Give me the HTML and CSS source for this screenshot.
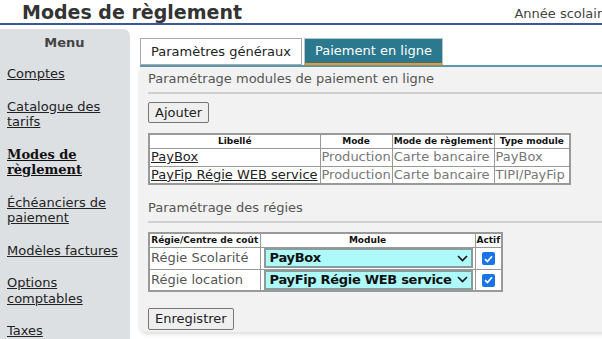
FILE: index.html
```html
<!DOCTYPE html>
<html lang="fr">
<head>
<meta charset="utf-8">
<title>Modes de règlement</title>
<link rel="stylesheet" href="styles.css">
</head>
<body>
<header class="top">
  <h1 class="title">Modes de règlement</h1>
  <span class="year">Année scolaire 2023-2024</span>
</header>
<div class="layout">
  <nav class="side">
    <div class="menu-title">Menu</div>
    <a class="nav-link" href="#">Comptes</a>
    <a class="nav-link" href="#">Catalogue des tarifs</a>
    <a class="nav-link current" href="#">Modes de règlement</a>
    <a class="nav-link" href="#">Échéanciers de paiement</a>
    <a class="nav-link" href="#">Modèles factures</a>
    <a class="nav-link" href="#">Options comptables</a>
    <a class="nav-link" href="#">Taxes</a>
  </nav>
  <main class="main">
    <div class="tabs">
      <span class="tab">Paramètres généraux</span>
      <span class="tab active">Paiement en ligne</span>
    </div>
    <section class="panel">
      <h2 class="sec">Paramétrage modules de paiement en ligne</h2>
      <div class="rule"></div>
      <button class="btn" type="button">Ajouter</button>
      <table class="grid modules">
        <thead>
          <tr><th class="c-lib">Libellé</th><th class="c-mode">Mode</th><th class="c-reg">Mode de règlement</th><th class="c-type">Type module</th></tr>
        </thead>
        <tbody>
          <tr><td><a href="#">PayBox</a></td><td class="muted">Production</td><td class="muted">Carte bancaire</td><td class="muted">PayBox</td></tr>
          <tr><td><a href="#">PayFip Régie WEB service</a></td><td class="muted">Production</td><td class="muted">Carte bancaire</td><td class="muted">TIPI/PayFip</td></tr>
        </tbody>
      </table>
      <h2 class="sec sec2">Paramétrage des régies</h2>
      <div class="rule"></div>
      <table class="grid regies">
        <thead>
          <tr><th class="r-name">Régie/Centre de coût</th><th class="r-mod">Module</th><th class="r-act">Actif</th></tr>
        </thead>
        <tbody>
          <tr>
            <td class="muted">Régie Scolarité</td>
            <td><span class="sel"><span class="sel-text">PayBox</span><svg class="chev" width="11" height="7" viewBox="0 0 11 7"><path d="M1 1l4.5 4.5L10 1" fill="none" stroke="#111" stroke-width="1.6"/></svg></span></td>
            <td class="center"><span class="chk"><svg width="9" height="8" viewBox="0 0 9 8"><path d="M1 4.2l2.4 2.3L8 1.3" fill="none" stroke="#fff" stroke-width="1.7"/></svg></span></td>
          </tr>
          <tr>
            <td class="muted">Régie location</td>
            <td><span class="sel"><span class="sel-text">PayFip Régie WEB service</span><svg class="chev" width="11" height="7" viewBox="0 0 11 7"><path d="M1 1l4.5 4.5L10 1" fill="none" stroke="#111" stroke-width="1.6"/></svg></span></td>
            <td class="center"><span class="chk"><svg width="9" height="8" viewBox="0 0 9 8"><path d="M1 4.2l2.4 2.3L8 1.3" fill="none" stroke="#fff" stroke-width="1.7"/></svg></span></td>
          </tr>
        </tbody>
      </table>
      <button class="btn save" type="button">Enregistrer</button>
    </section>
  </main>
</div>
</body>
</html>
```

FILE: styles.css
```css
* { box-sizing: border-box; }
html, body { margin: 0; padding: 0; }
body {
  font-family: "DejaVu Sans", Verdana, sans-serif;
  font-size: 13px;
  color: #333;
  background: #fff;
  width: 602px;
  height: 339px;
  overflow: hidden;
}
.top {
  display: flex;
  align-items: flex-end;
  justify-content: space-between;
  height: 25px;
  border-bottom: 2px solid #3b5a92;
  padding-left: 22px;
  white-space: nowrap;
  overflow: hidden;
}
.title {
  margin: 0;
  font-size: 19px;
  font-weight: bold;
  color: #333;
  line-height: 22px;
}
.year {
  font-size: 13px;
  color: #444;
  line-height: 16px;
  margin-right: -83px;
  padding-bottom: 1px;
}
.layout {
  display: flex;
  gap: 10px;
  padding-top: 4px;
}
.side {
  width: 130px;
  flex: none;
  height: 320px;
  background: #dde0e3;
  border-top-right-radius: 7px;
  padding: 6px 8px 0 7px;
  display: flex;
  flex-direction: column;
  align-items: flex-start;
  gap: 17px;
}
.menu-title {
  align-self: stretch;
  text-align: center;
  font-weight: bold;
  color: #444;
  line-height: 16px;
  margin-bottom: -2px;
}
.nav-link {
  color: #222;
  text-decoration: underline;
  line-height: 15.5px;
}
.nav-link.current {
  font-family: "DejaVu Serif", serif;
  font-weight: bold;
  color: #111;
}
.main {
  flex: 1;
  min-width: 0;
  padding-top: 9px;
}
.tabs {
  display: flex;
  gap: 2px;
  height: 29px;
  border-bottom: 2px solid #5d9aab;
  align-items: flex-start;
}
.tab {
  height: 27px;
  padding: 0 10px;
  line-height: 25px;
  border: 1px solid #aaa;
  background: #fff;
  color: #222;
  white-space: nowrap;
}
.tab.active {
  background: #2b798e;
  border-color: #b8c5c9;
  color: #fff;
  border-bottom: 2px solid #f7931e;
  line-height: 24px;
}
.panel {
  background: #f2f2f2;
  height: 265px;
  margin-right: -10px;
  padding: 4px 8px 0 8px;
  border-bottom-left-radius: 7px;
  box-shadow: 0 2px 4px rgba(0,0,0,0.15);
}
.sec {
  margin: 0;
  font-size: 13px;
  font-weight: normal;
  color: #555;
  line-height: 16px;
}
.sec2 { margin-top: 15px; }
.rule {
  height: 2px;
  background: #cfcfcf;
  margin: 5px 0 8px;
}
.btn {
  display: block;
  font-family: "DejaVu Sans", Verdana, sans-serif;
  font-size: 13px;
  color: #222;
  background: #efefef;
  border: 1px solid #767676;
  border-radius: 2px;
  padding: 0 6px;
  height: 21px;
  line-height: 18px;
}
.save { margin-top: 16px; height: 22px; }
.grid {
  border-collapse: collapse;
  background: #fff;
  border: 2px solid #999;
}
.grid th, .grid td {
  border: 1px solid #999;
  padding: 0 1px;
  white-space: nowrap;
}
.grid th {
  font-size: 9px;
  font-weight: bold;
  color: #111;
  line-height: 12px;
  height: 14px;
}
.grid td {
  line-height: 16px;
  height: 18px;
}
.grid a { color: #222; text-decoration: underline; }
.muted { color: #777; }
.modules { margin-top: 10px; }
.modules .c-lib { width: 171px; }
.modules .c-mode { width: 72px; }
.modules .c-reg { width: 100px; }
.modules .c-type { width: 76px; }
.regies { margin-top: 9px; }
.regies td { height: 22px; }
.regies .muted { color: #555; }
.r-name { width: 111px; }
.r-mod { width: 215px; }
.r-act { width: 27px; }
.center { text-align: center; }
.sel {
  display: flex;
  align-items: center;
  justify-content: space-between;
  width: 209px;
  height: 20px;
  margin: 0 1px 0 2px;
  padding: 0 3px 0 4px;
  background: #aefafa;
  border: 2px solid #8d9a9a;
  font-weight: bold;
  color: #111;
  line-height: 16px;
}
.sel-text { letter-spacing: -0.3px; }
.chev { flex: none; margin-left: 3px; }
.chk {
  display: inline-flex;
  align-items: center;
  justify-content: center;
  width: 13px;
  height: 13px;
  border-radius: 2px;
  background: #1a73e8;
  vertical-align: middle;
}
```
